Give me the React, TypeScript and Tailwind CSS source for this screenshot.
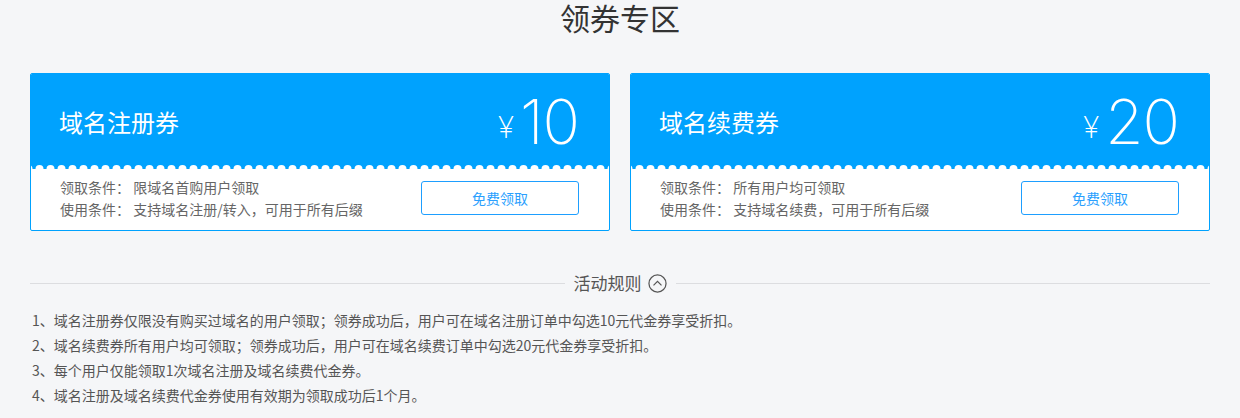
import React from "react";

const cjk = "font-['Microsoft_YaHei','Noto_Sans_CJK_SC',sans-serif]";

type Coupon = {
  title: string;
  amount: string;
  get: string;
  use: string;
};

const coupons: Coupon[] = [
  { title: "域名注册券", amount: "10", get: "限域名首购用户领取", use: "支持域名注册/转入，可用于所有后缀" },
  { title: "域名续费券", amount: "20", get: "所有用户均可领取", use: "支持域名续费，可用于所有后缀" },
];

const rules = [
  "1、域名注册券仅限没有购买过域名的用户领取；领券成功后，用户可在域名注册订单中勾选10元代金券享受折扣。",
  "2、域名续费券所有用户均可领取；领券成功后，用户可在域名续费订单中勾选20元代金券享受折扣。",
  "3、每个用户仅能领取1次域名注册及域名续费代金券。",
  "4、域名注册及域名续费代金券使用有效期为领取成功后1个月。",
];

const Scallop = ({ id }: { id: string }) => (
  <svg className="absolute bottom-0 left-0 h-[4px] w-full" preserveAspectRatio="none">
    <defs>
      <pattern id={id} x="3" y="0" width="11" height="4" patternUnits="userSpaceOnUse">
        <circle cx="5.5" cy="4" r="4" fill="#fff" />
      </pattern>
    </defs>
    <rect width="100%" height="4" fill={`url(#${id})`} />
  </svg>
);

const CouponCard = ({ c, i }: { c: Coupon; i: number }) => (
  <div className="flex-1 overflow-hidden rounded-[2px] border border-[#00a2fe] bg-white">
    <div className="relative flex h-[95px] items-center justify-between bg-[#00a2fe] pl-[28px] pr-[30px]">
      <div className={`${cjk} text-[24px] leading-none text-white`}>{c.title}</div>
      <div className="flex items-center text-white">
        <span className="mr-[6px] mt-[10px] font-['Inter',sans-serif] text-[30px] font-extralight leading-none">¥</span>
        <span className="font-['Inter',sans-serif] text-[62px] font-extralight leading-none tracking-[-1px]">{c.amount}</span>
      </div>
      <Scallop id={`scallop-${i}`} />
    </div>
    <div className={`${cjk} flex h-[61px] items-center justify-between pl-[29px] pr-[30px] text-[14px] text-[#666]`}>
      <div className="-mt-[4px] leading-[22px]">
        <div>领取条件：&nbsp;{c.get}</div>
        <div>使用条件：&nbsp;{c.use}</div>
      </div>
      <button className="-mt-[3px] h-[34px] w-[158px] rounded-[3px] border border-[#1e9fff] bg-white text-[14px] text-[#2a9ffe]">
        免费领取
      </button>
    </div>
  </div>
);

export default function App() {
  return (
    <div className={`${cjk} min-h-[418px] bg-[#f5f6f8] px-[30px]`}>
      <h1 className="text-center text-[30px] leading-[34px] text-[#333]">领券专区</h1>
      <div className="mt-[39px] flex gap-[20px]">
        {coupons.map((c, i) => (
          <CouponCard key={c.title} c={c} i={i} />
        ))}
      </div>
      <div className="mt-[40px] flex h-[24px] items-center">
        <div className="h-px flex-1 bg-[#dcdde0]" />
        <div className="flex items-center px-[9px] text-[17px] text-[#555]">
          活动规则
          <svg className="ml-[6px] h-[19px] w-[19px]" viewBox="0 0 20 20" fill="none" stroke="#555" strokeWidth="1.3">
            <circle cx="10" cy="10" r="9" />
            <path d="M5.8 12 L10 7.8 L14.2 12" />
          </svg>
        </div>
        <div className="h-px flex-1 bg-[#dcdde0]" />
      </div>
      <div className="mt-[13px] pl-[2px] text-[14px] leading-[25px] text-[#555]">
        {rules.map((r) => (
          <div key={r}>{r}</div>
        ))}
      </div>
    </div>
  );
}
